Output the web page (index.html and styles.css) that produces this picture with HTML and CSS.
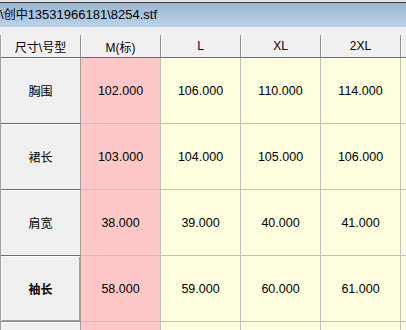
FILE: index.html
```html
<!DOCTYPE html>
<html>
<head>
<meta charset="utf-8">
<link rel="stylesheet" href="styles.css">
</head>
<body>
<div class="window">
  <div class="topstrip"></div>
  <div class="titlebar"><span class="title">\<span class="cjk">创中</span>13531966181\8254.stf</span></div>
  <div class="gap"></div>
  <div class="gridwrap">
  <div class="grid">
    <div class="hd">尺寸\号型</div>
    <div class="hd">M(标)</div>
    <div class="hd">L</div>
    <div class="hd">XL</div>
    <div class="hd">2XL</div>
    <div class="hd"></div>

    <div class="rh">胸围</div>
    <div class="c base">102.000</div>
    <div class="c">106.000</div>
    <div class="c">110.000</div>
    <div class="c">114.000</div>
    <div class="c"></div>

    <div class="rh">裙长</div>
    <div class="c base">103.000</div>
    <div class="c">104.000</div>
    <div class="c">105.000</div>
    <div class="c">106.000</div>
    <div class="c"></div>

    <div class="rh">肩宽</div>
    <div class="c base">38.000</div>
    <div class="c">39.000</div>
    <div class="c">40.000</div>
    <div class="c">41.000</div>
    <div class="c"></div>

    <div class="rh sel">袖长</div>
    <div class="c base">58.000</div>
    <div class="c">59.000</div>
    <div class="c">60.000</div>
    <div class="c">61.000</div>
    <div class="c"></div>

    <div class="rh"></div>
    <div class="c base"></div>
    <div class="c"></div>
    <div class="c"></div>
    <div class="c"></div>
    <div class="c"></div>
  </div>
  </div>
</div>
</body>
</html>
```

FILE: styles.css
```css
html, body {
  margin: 0;
  padding: 0;
  overflow: hidden;
  background: #f0f0f0;
}
body {
  width: 406px;
  height: 330px;
  font-family: "Liberation Sans", "Noto Sans CJK SC", sans-serif;
  font-size: 12px;
  color: #000;
}
.window {
  width: 406px;
  height: 330px;
  overflow: hidden;
  display: flex;
  flex-direction: column;
}
.topstrip {
  height: 2px;
  flex: none;
  background: #e6e6e6;
}
.titlebar {
  height: 24px;
  flex: none;
  border-top: 1px solid #3c3c3c;
  background: linear-gradient(#9db5ce, #bbd3ec);
  display: flex;
  align-items: center;
  white-space: nowrap;
}
.title {
  font-size: 13px;
  line-height: 16px;
}
.title .cjk {
  font-size: 12px;
}
.gap {
  height: 8px;
  flex: none;
  background: #f0f0f0;
}
.gridwrap {
  flex: 1;
  min-height: 0;
  overflow: hidden;
}
.grid {
  display: grid;
  grid-template-columns: repeat(6, 80px);
  grid-template-rows: 23px repeat(5, 66px);
  border-left: 1px solid #a0a0a0;
  width: max-content;
}
.grid > div {
  box-sizing: border-box;
  display: flex;
  align-items: center;
  justify-content: center;
  white-space: nowrap;
}
.hd {
  background: #f0f0f0;
  border-right: 1px solid #8e8e8e;
  border-bottom: 1px solid #6c6c6c;
  box-shadow: inset 1px 0 0 #ffffff;
}
.rh {
  background: #f0f0f0;
  border-right: 1px solid #a0a0a0;
  border-bottom: 1px solid #6c6c6c;
  box-shadow: inset 0 1px 0 #ffffff;
}
.rh.sel {
  font-weight: bold;
  box-shadow: inset 1px 1px 0 #ffffff, inset -1px -1px 0 #a0a0a0;
  border-bottom: 1px solid #8a8a8a;
}
.c {
  font-size: 12.5px;
  background: #ffffe0;
  border-right: 1px solid #c0c0c0;
  border-bottom: 1px solid #c0c0c0;
}
.c.base {
  background: #ffc8c8;
}
```
